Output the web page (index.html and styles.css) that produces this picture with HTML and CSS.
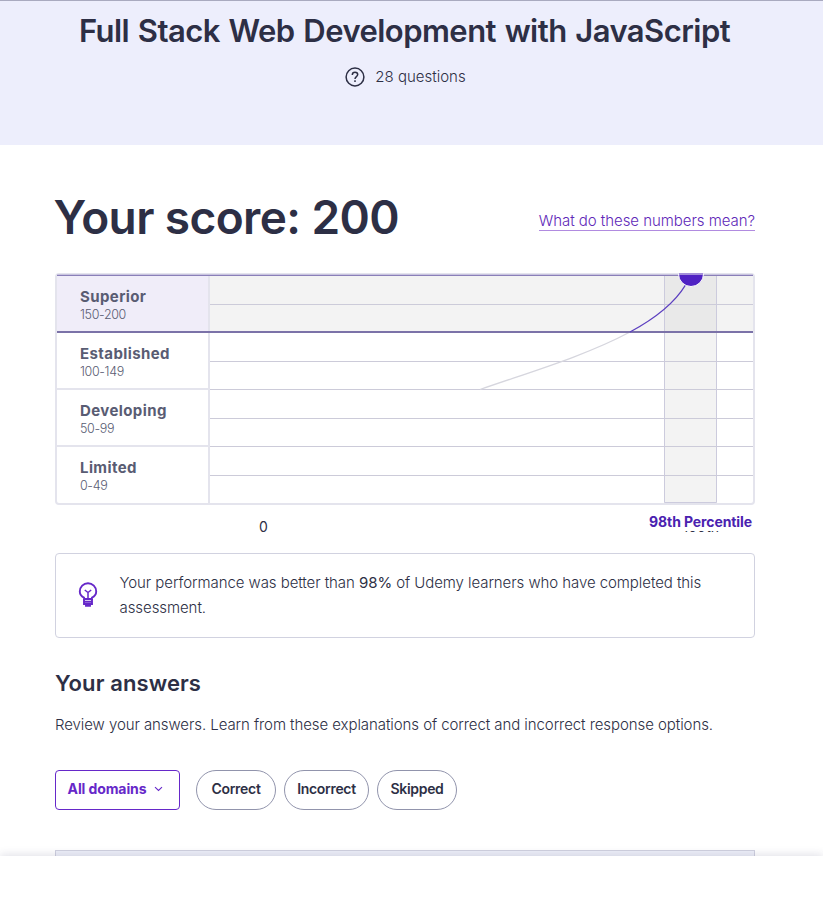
FILE: index.html
```html
<!DOCTYPE html>
<html lang="en">
<head>
<meta charset="utf-8">
<title>Assessment results</title>
<link rel="stylesheet" href="styles.css">
</head>
<body>
<header class="hero">
  <h1 class="hero-title">Full Stack Web Development with JavaScript</h1>
  <div class="hero-meta">
    <svg class="help-icon" viewBox="0 0 20 20" fill="none" stroke="#2d2f45" stroke-width="1.5"><circle cx="10" cy="10" r="8.9"/><path d="M7.3 7.900c0-1.700 1.100-2.600 2.700-2.600s2.700.900 2.700 2.300c0 2-2.700 2.100-2.700 4.300"/><path d="M10 13.300v1.600"/></svg>
    <span>28 questions</span>
  </div>
</header>
<main class="content">
  <div class="score-row">
    <h2 class="score">Your score: 200</h2>
    <a class="link" href="#">What do these numbers mean?</a>
  </div>
  <section class="chart">
    <div class="levels">
      <div class="level active"><b>Superior</b><small>150-200</small></div>
      <div class="level"><b>Established</b><small>100-149</small></div>
      <div class="level"><b>Developing</b><small>50-99</small></div>
      <div class="level last"><b>Limited</b><small>0-49</small></div>
    </div>
    <svg class="plot" viewBox="210 275 543 228" width="543" height="228">
      <rect x="210" y="275" width="543" height="57" fill="#f3f3f3"/>
      <rect x="664" y="275" width="53" height="57" fill="#e9e9e9"/>
      <rect x="664" y="332" width="53" height="171" fill="#f3f3f3"/>
      <path d="M210 304.500H753M210 361.500H753M210 389.500H753M210 418.500H753M210 446.500H753M210 475.500H753" stroke="#cccbd9"/>
      <path d="M664.500 275V502.500H716.500V275" fill="none" stroke="#cccbdd"/>
      <path d="M480 389.500C530 372 585 356 630 332" fill="none" stroke="#d6d6de" stroke-width="1.300"/>
      <path d="M57 274.500H753" stroke="#c9c4e0"/>
      <path d="M57 275.500H753" stroke="#8a7fb8"/>
      <path d="M208 332H753" stroke="#7b72a8" stroke-width="2"/>
      <path d="M630 332C656 318 674 304 685.500 285" fill="none" stroke="#5c3fc0" stroke-width="1.400"/>
      <path d="M678.500 274A12.500 12.500 0 0 0 703.500 274Z" fill="#5022c3" stroke="#fff"/>
      <path d="M679 274H703" stroke="#a48fda" stroke-width="2"/>
    </svg>
  </section>
  <div class="axis">
    <span class="axis-min">0</span>
    <span class="axis-max">100th</span>
    <strong class="percentile">98th Percentile</strong>
  </div>
  <section class="notice">
    <svg class="bulb" viewBox="0 0 20 26" fill="none" stroke="#6628c9" stroke-width="1.900"><path d="M6 17v-1.400C3.200 14.300 1.800 12 1.800 9.500a8.200 8.200 0 0 1 16.400 0c0 2.500-1.400 4.800-4.200 6.100V17z"/><path d="M10 16v-5.500L6.800 8M10 10.500 13.200 8" stroke-width="1.500"/><path d="M6 17v5h8v-5M6 19.700h8M8 22v1.800h4V22"/></svg>
    <p>Your performance was better than <em>98%</em> of Udemy learners who have completed this assessment.</p>
  </section>
  <h3 class="answers-title">Your answers</h3>
  <p class="answers-text">Review your answers. Learn from these explanations of correct and incorrect response options.</p>
  <div class="filters">
    <button class="select"><span>All domains</span><svg width="9" height="6" viewBox="0 0 9 6" fill="none" stroke="#6628c9" stroke-width="1.100"><path d="M1 1.200 4.500 4.400 8 1.200"/></svg></button>
    <button class="pill p1">Correct</button>
    <button class="pill p2">Incorrect</button>
    <button class="pill p3">Skipped</button>
  </div>
  <div class="panel"></div>
</main>
<footer class="bottom-bar"></footer>
</body>
</html>
```
FILE: styles.css
```css
* { box-sizing: border-box; }
body { margin: 0; height: 906px; overflow: hidden; background: #fff; color: #2d2f45; font: 300 15px/25px Inter, sans-serif; }
h1, h2, h3, p { margin: 0; }
.hero { height: 145px; border-top: 1px solid #a9aabf; background: #edeefc; display: flex; flex-direction: column; align-items: center; padding-top: 10px; }
.hero-title { font-size: 31px; line-height: 40px; font-weight: 600; letter-spacing: -.54px; word-spacing: 1.4px; margin-right: 14px; }
.hero-meta { display: flex; align-items: center; gap: 10px; margin: 13px 12px 0 0; }
.help-icon { width: 20px; height: 20px; }
.content { width: 700px; margin-left: 55px; }
.score-row { display: flex; justify-content: space-between; padding-top: 42px; height: 128px; }
.score { font-size: 46px; line-height: 60px; font-weight: 600; letter-spacing: -.6px; margin-left: -1.5px; }
.link { align-self: flex-start; margin-top: 25px; line-height: 18px; letter-spacing: -.04px; color: #6028b8; text-decoration: none; border-bottom: 1px solid #b18be0; }
.chart { height: 232px; border: 2px solid #e4e4ed; border-radius: 4px; display: flex; }
.levels { width: 153px; display: flex; flex-direction: column; }
.level { height: 57px; display: flex; flex-direction: column; padding: 11px 0 0 23px; border-right: 2px solid #e4e4ed; border-bottom: 2px solid #e4e4ed; color: #595c73; }
.level b { font-size: 15px; line-height: 20px; font-weight: 700; letter-spacing: .4px; }
.level small { font-size: 12.5px; line-height: 16px; letter-spacing: -.35px; }
.level.active { height: 58px; background: #f0edf9; border-top: 1px solid #8a7fb8; border-bottom-color: #7b72a8; }
.level.last { height: 56px; border-bottom: 0; }
.plot { display: block; overflow: visible; }
.axis { position: relative; height: 48px; display: flex; justify-content: space-between; padding: 14px 36px 0 204px; line-height: 16px; font-size: 14px; font-weight: 400; }
.percentile { position: absolute; right: 0; top: 8px; height: 18px; line-height: 18px; padding: 0 3px; background: #fff; color: #4a22b0; font-size: 14px; font-weight: 700; letter-spacing: -.1px; }
.notice { height: 85px; border: 1px solid #d1d2e0; border-radius: 4px; display: flex; align-items: flex-start; padding: 16px 40px 0 22px; gap: 21.5px; letter-spacing: -.07px; }
.bulb { width: 20px; height: 26px; margin-top: 12px; flex: none; }
.notice em { font-style: normal; font-weight: 400; }
.answers-title { margin-top: 30px; font-size: 22px; line-height: 30px; font-weight: 600; letter-spacing: .1px; }
.answers-text { margin-top: 14px; letter-spacing: -.075px; }
.filters { display: flex; margin-top: 33px; }
button { font: 600 14px/20px Inter, sans-serif; letter-spacing: -.3px; height: 40px; padding: 0; background: #fff; color: #2d2f45; display: flex; align-items: center; justify-content: center; }
.select { width: 125px; gap: 8px; padding: 0 4px 2px 0; border: 1px solid #6628c9; border-radius: 4px; color: #6628c9; margin-right: 16px; font-weight: 700; letter-spacing: -.1px; }
.pill { padding-bottom: 2px; border: 1px solid #9194ac; border-radius: 20px; margin-right: 8px; }
.p1 { width: 80px; }
.p2 { width: 85px; }
.p3 { width: 80px; }
.panel { margin-top: 40px; height: 30px; border: 1px solid #cfd0df; background: #eef0f9; }
.bottom-bar { position: fixed; left: 0; right: 0; bottom: 0; height: 50px; background: #fff; box-shadow: 0 -2px 8px rgba(45,47,89,.13); }
```
